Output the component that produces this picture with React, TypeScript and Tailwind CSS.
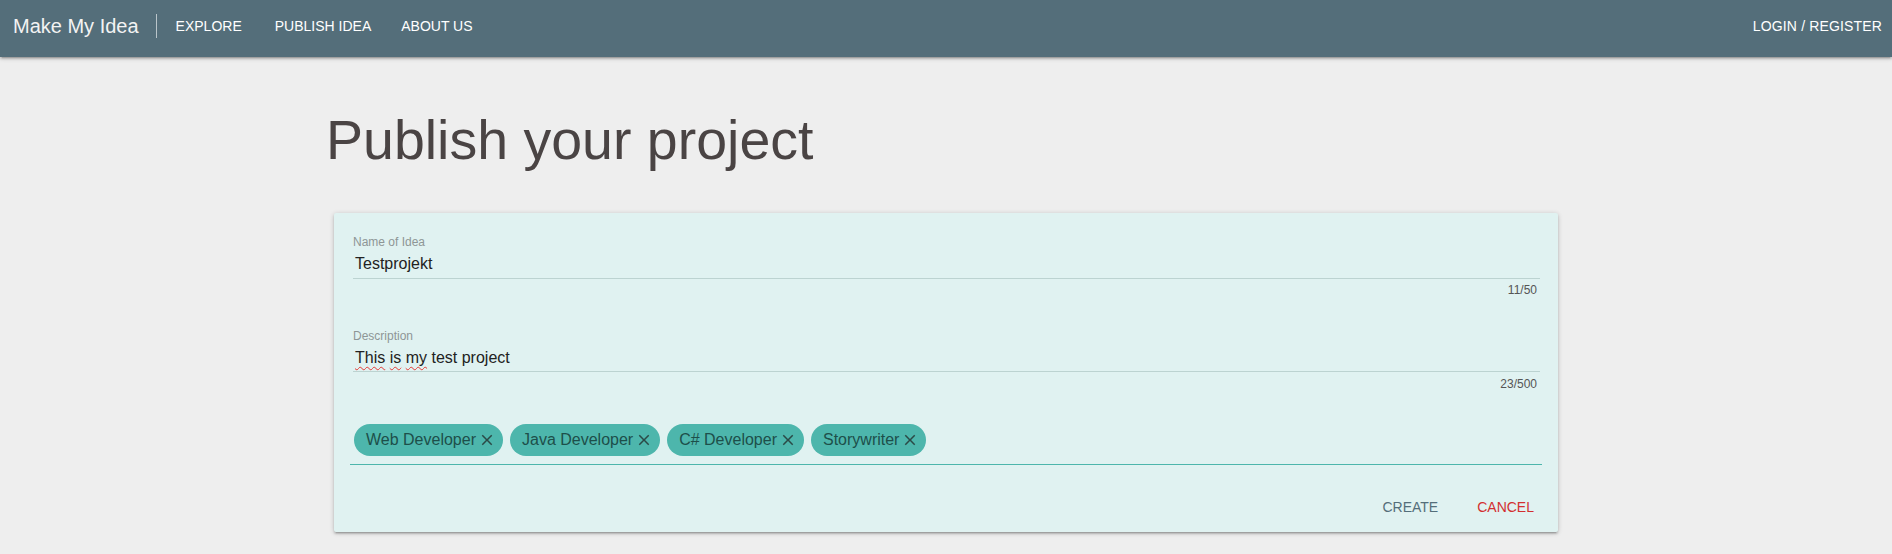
import React from "react";

const chips = ["Web Developer", "Java Developer", "C# Developer", "Storywriter"];

const CloseIcon: React.FC = () => (
  <svg viewBox="0 0 24 24" className="w-[18px] h-[18px] shrink-0 ml-[2px]" fill="#2b4a47">
    <path d="M19 6.41L17.59 5 12 10.59 6.41 5 5 6.41 10.59 12 5 17.59 6.41 19 12 13.41 17.59 19 19 17.59 13.41 12z" />
  </svg>
);

const Spell: React.FC<{ children: React.ReactNode }> = ({ children }) => (
  <span className="underline decoration-wavy decoration-[#e53935] decoration-1 underline-offset-[3px]">
    {children}
  </span>
);

const App: React.FC = () => {
  return (
    <div className="min-h-screen bg-[#eeeeee] font-['Liberation_Sans',Arial,sans-serif]">
      {/* Navbar */}
      <nav className="h-[57px] pb-[5px] bg-[#546e7a] flex items-center text-white shadow-[0_2px_2px_0_rgba(0,0,0,0.14),0_3px_1px_-2px_rgba(0,0,0,0.12),0_1px_5px_0_rgba(0,0,0,0.2)] relative z-10">
        <a className="pl-[13px] text-[20px] leading-[24px] text-[#f3f3f3]">Make My Idea</a>
        <div className="ml-[17px] mr-[4px] w-px h-[24px] bg-white/60"></div>
        <a className="px-[15px] text-[14px] leading-[16px]">EXPLORE</a>
        <a className="ml-[3px] px-[15px] text-[14px] leading-[16px]">PUBLISH IDEA</a>
        <a className="px-[15px] text-[14px] leading-[16px]">ABOUT US</a>
        <a className="ml-auto pr-[10px] text-[14px] leading-[16px] tracking-[0.15px]">LOGIN / REGISTER</a>
      </nav>

      {/* Title */}
      <div className="w-[1240px] mx-auto mt-[51px]">
        <h1 className="text-[55.5px] leading-[64px] text-[#4a4444]">Publish your project</h1>
      </div>

      {/* Card */}
      <div className="w-[1224px] mx-auto mt-[41px] bg-[#e0f2f1] rounded-[2px] shadow-[0_2px_2px_0_rgba(0,0,0,0.14),0_3px_1px_-2px_rgba(0,0,0,0.12),0_1px_5px_0_rgba(0,0,0,0.2)] pt-[22px] px-[16px]">
        {/* Name */}
        <div className="pl-[3px] pr-[2px]">
          <label className="block text-[12px] leading-[14px] text-[#8e9696]">Name of Idea</label>
          <div className="pt-[5px] pb-[4px] border-b border-[#bcd3d1]">
            <div className="pl-[2px] text-[16px] leading-[20px] text-[#222]">Testprojekt</div>
          </div>
          <div className="mt-[4px] pr-[3px] text-right text-[12px] leading-[14px] text-[#555]">11/50</div>
        </div>

        {/* Description */}
        <div className="pl-[3px] pr-[2px] mt-[32px]">
          <label className="block text-[12px] leading-[14px] text-[#8e9696]">Description</label>
          <div className="pt-[5px] pb-[3px] border-b border-[#bcd3d1]">
            <div className="pl-[2px] text-[16px] leading-[20px] text-[#222]">
              <Spell>This</Spell> <Spell>is</Spell> <Spell>my</Spell> test project
            </div>
          </div>
          <div className="mt-[5px] pr-[3px] text-right text-[12px] leading-[14px] text-[#555]">23/500</div>
        </div>

        {/* Chips */}
        <div className="mt-[33px] pl-[4px] pb-[8px] border-b border-[#4db6ac] flex gap-[7px]">
          {chips.map((c) => (
            <div
              key={c}
              className="h-[32px] rounded-full bg-[#4db6ac] pl-[12px] pr-[7px] flex items-center text-[16px] text-[#1d4f4a]"
            >
              <span>{c}</span>
              <CloseIcon />
            </div>
          ))}
        </div>

        {/* Actions */}
        <div className="mt-[24px] pb-[7px] flex justify-end gap-[7px] -mr-[8px]">
          <button className="h-[36px] leading-[36px] px-[16px] text-[14px] text-[#546e7a]">CREATE</button>
          <button className="h-[36px] leading-[36px] px-[16px] text-[14px] text-[#d32f2f]">CANCEL</button>
        </div>
      </div>
    </div>
  );
};

export default App;
